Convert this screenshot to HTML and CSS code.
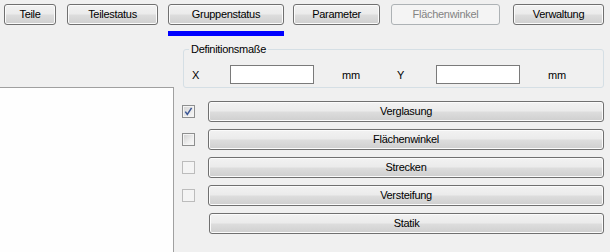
FILE: index.html
```html
<!DOCTYPE html>
<html lang="de">
<head>
<meta charset="utf-8">
<title>Gruppenstatus</title>
<link rel="stylesheet" href="styles.css">
</head>
<body>
<div class="toolbar">
  <button class="btn tab tab-teile">Teile</button>
  <button class="btn tab tab-teilestatus">Teilestatus</button>
  <button class="btn tab tab-gruppen is-active">Gruppenstatus</button>
  <button class="btn tab tab-parameter">Parameter</button>
  <button class="btn tab tab-flaechen" disabled>Flächenwinkel</button>
  <button class="btn tab tab-verwaltung">Verwaltung</button>
</div>
<div class="main">
  <div class="left">
    <div class="list-panel"></div>
  </div>
  <div class="right">
    <fieldset class="group">
      <legend class="group-title">Definitionsmaße</legend>
      <div class="dims">
        <span class="lbl lbl-x">X</span>
        <input class="field" type="text">
        <span class="unit">mm</span>
        <span class="lbl lbl-y">Y</span>
        <input class="field" type="text">
        <span class="unit unit-last">mm</span>
      </div>
    </fieldset>
    <div class="rows">
      <div class="row">
        <span class="check is-checked"><svg viewBox="0 0 9 9" width="9" height="9"><path d="M1.3 4.6 L3.3 7.4 L7.6 0.9" fill="none" stroke="#3c5796" stroke-width="1.5"/></svg></span>
        <button class="btn wide">Verglasung</button>
      </div>
      <div class="row">
        <span class="check"></span>
        <button class="btn wide">Flächenwinkel</button>
      </div>
      <div class="row">
        <span class="check is-disabled"></span>
        <button class="btn wide">Strecken</button>
      </div>
      <div class="row">
        <span class="check is-disabled"></span>
        <button class="btn wide">Versteifung</button>
      </div>
      <div class="row row-nocheck">
        <button class="btn wide">Statik</button>
      </div>
    </div>
  </div>
</div>
</body>
</html>
```

FILE: styles.css
```css
html, body {
  margin: 0;
  padding: 0;
  background: #f0f0f0;
  width: 610px;
  height: 252px;
  overflow: hidden;
  font-family: "Liberation Sans", Arial, sans-serif;
  font-size: 11px;
  color: #000;
}

.btn {
  box-sizing: border-box;
  height: 21px;
  margin: 0;
  padding: 0;
  border: 1px solid #707070;
  border-radius: 3px;
  background: linear-gradient(#f2f2f2 0%, #ebebeb 48%, #dddddd 52%, #cfcfcf 100%);
  box-shadow: inset 0 0 0 1px #fbfbfb;
  font-family: "Liberation Sans", Arial, sans-serif;
  font-size: 11px;
  letter-spacing: -0.3px;
  color: #000;
  line-height: 19px;
  text-align: center;
}

.btn:disabled {
  border-color: #adb2b5;
  background: #f4f4f4;
  box-shadow: none;
  color: #838383;
}

.toolbar {
  display: flex;
  height: 40px;
  padding-top: 4px;
  box-sizing: border-box;
}

.tab { position: relative; }
.tab-teile { margin-left: 4px; width: 52px; }
.tab-teilestatus { margin-left: 11px; width: 91px; }
.tab-gruppen { margin-left: 10px; width: 116px; }
.tab-parameter { margin-left: 9px; width: 87px; }
.tab-flaechen { margin-left: 11px; width: 109px; }
.tab-verwaltung { margin-left: 13px; width: 91px; }

.is-active::after {
  content: "";
  position: absolute;
  left: -1px;
  right: -1px;
  top: 26px;
  height: 5px;
  background: #0000ff;
}

.main {
  display: flex;
  height: 212px;
}

.left {
  width: 174px;
  flex: none;
  display: flex;
  flex-direction: column;
  padding-top: 47px;
  box-sizing: border-box;
}

.list-panel {
  flex: 1;
  background: #fefefe;
  border-top: 1px solid #a0a0a0;
  border-right: 1px solid #a0a0a0;
}

.right {
  flex: 1;
  display: flex;
  flex-direction: column;
}

.group {
  margin: 3px 0 0 9px;
  width: 421px;
  box-sizing: border-box;
  padding: 0;
  border: 1px solid #d5dfe5;
  border-radius: 3px;
  height: 45px;
}

.group-title {
  margin-left: 5px;
  padding: 0 2px;
  line-height: 12px;
  letter-spacing: -0.3px;
}

.dims {
  display: flex;
  align-items: center;
  padding: 10px 0 0 8px;
}

.lbl { letter-spacing: -0.2px; }
.lbl-x { width: 38px; }
.lbl-y { width: 39px; }

.field {
  box-sizing: border-box;
  width: 84px;
  height: 19px;
  margin: 0;
  border: 1px solid #7a7a7a;
  background: #fff;
  padding: 0;
}

.unit {
  margin-left: 28px;
  width: 55px;
  letter-spacing: -0.2px;
}

.unit-last { width: auto; }

.rows {
  display: flex;
  flex-direction: column;
  gap: 7px;
  margin-top: 13px;
}

.row {
  display: flex;
  align-items: center;
  padding-left: 8px;
}

.row-nocheck { padding-left: 35px; }

.check {
  box-sizing: border-box;
  width: 13px;
  height: 13px;
  margin-right: 13px;
  border: 1px solid #8e8f8f;
  background: linear-gradient(135deg, #cfcfcf 0%, #eeeeee 60%, #fafafa 100%);
  box-shadow: inset 0 0 0 1px #f4f4f4;
  display: flex;
  align-items: center;
  justify-content: center;
}

.check svg { display: block; }

.check.is-checked {
  background: linear-gradient(135deg, #d4d4d4 0%, #eeeeee 70%, #fafafa 100%);
}

.check.is-disabled {
  border-color: #bcbcbc;
  background: #f4f4f4;
  box-shadow: none;
}

.wide { width: 396px; }
.row-nocheck .wide { width: 395px; }
```
